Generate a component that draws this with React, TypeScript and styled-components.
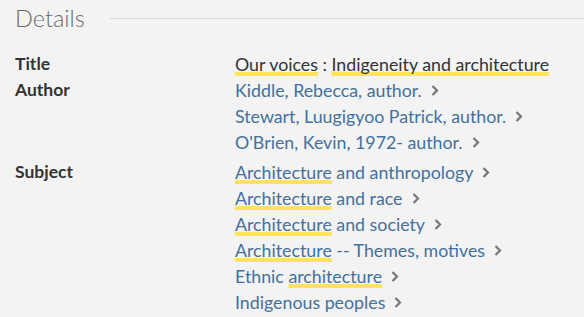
import styled, { createGlobalStyle } from "styled-components"

const GlobalStyle = createGlobalStyle`
  html, body {
    margin: 0;
    background: #f3f3f3;
  }
  body {
    font-family: Lato, "Liberation Sans", sans-serif;
  }
`

const Section = styled.section`
  padding: 4px 0 0 15px;
  width: 569px;
`

const Header = styled.div`
  display: flex;
  align-items: center;
  gap: 25px;
  height: 28px;
`

const Heading = styled.h2`
  margin: 0;
  font-size: 23.5px;
  font-weight: 300;
  color: #6b6b6b;
  line-height: 28px;
`

const Rule = styled.div`
  flex: 1;
  height: 1px;
  background: #d9d9d9;
`

const Fields = styled.dl`
  display: grid;
  grid-template-columns: 220px 1fr;
  margin: 19px 0 0;
`

const Label = styled.dt`
  font-weight: 700;
  font-size: 17.5px;
  color: #333;
  line-height: 26px;
`

const Values = styled.dd<{ $after?: number }>`
  margin: 0 0 ${p => p.$after ?? 0}px;
  display: flex;
  flex-direction: column;
`

const Line = styled.div<{ $link?: boolean }>`
  display: flex;
  align-items: center;
  gap: 9px;
  font-size: 17.8px;
  line-height: 26px;
  color: ${p => (p.$link ? "#43709d" : "#333")};
`

const Mark = styled.span`
  text-decoration: underline;
  text-decoration-color: #ffe25e;
  text-decoration-thickness: 4px;
  text-underline-offset: 1px;
  text-decoration-skip-ink: none;
`

const Chevron = () => (
  <svg width="8" height="13" viewBox="0 0 8 13">
    <polyline points="1.5,2 6,6.5 1.5,11" fill="none" stroke="#777" strokeWidth="2.2" />
  </svg>
)

const authors = [
  "Kiddle, Rebecca, author.",
  "Stewart, Luugigyoo Patrick, author.",
  "O'Brien, Kevin, 1972- author.",
]

const subjects: [string, string, string][] = [
  ["", "Architecture", " and anthropology"],
  ["", "Architecture", " and race"],
  ["", "Architecture", " and society"],
  ["", "Architecture", " -- Themes, motives"],
  ["Ethnic ", "architecture", ""],
  ["Indigenous peoples", "", ""],
]

export default function App() {
  return (
    <>
      <GlobalStyle />
      <Section>
        <Header>
          <Heading>Details</Heading>
          <Rule />
        </Header>
        <Fields>
          <Label>Title</Label>
          <Values>
            <Line>
              <span>
                <Mark>Our voices</Mark> : <Mark>Indigeneity and architecture</Mark>
              </span>
            </Line>
          </Values>
          <Label>Author</Label>
          <Values $after={4}>
            {authors.map(a => (
              <Line $link key={a}>
                <span>{a}</span>
                <Chevron />
              </Line>
            ))}
          </Values>
          <Label>Subject</Label>
          <Values>
            {subjects.map(([pre, mark, post]) => (
              <Line $link key={pre + mark + post}>
                <span>
                  {pre}
                  {mark && <Mark>{mark}</Mark>}
                  {post}
                </span>
                <Chevron />
              </Line>
            ))}
          </Values>
        </Fields>
      </Section>
    </>
  )
}
